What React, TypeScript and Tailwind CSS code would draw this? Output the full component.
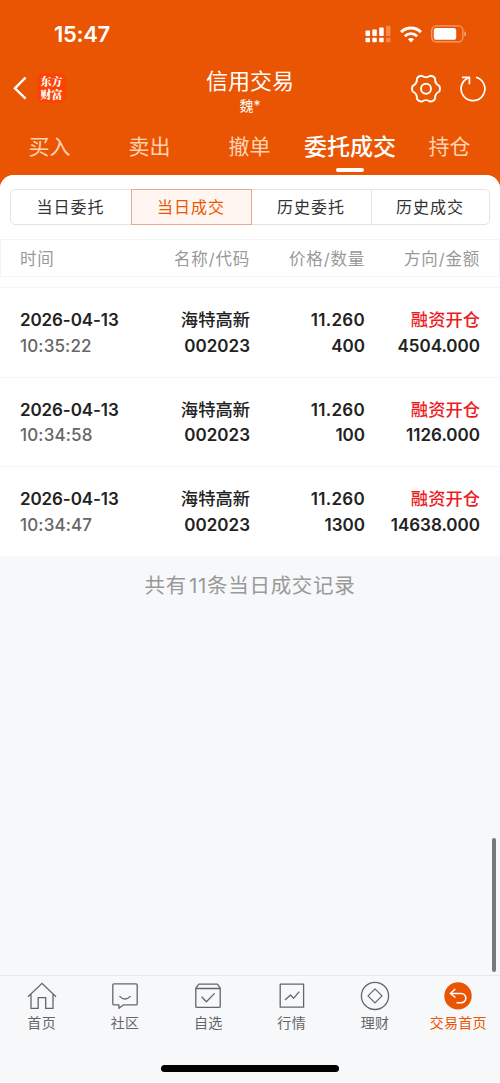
import React, { type ReactNode } from 'react';
import clsx from 'clsx';

interface RecordType {
  date: string;
  time: string;
  name: string;
  code: string;
  price: string;
  count: string;
  direction: string;
  amount: string;
}

const tabs = ['买入', '卖出', '撤单', '委托成交', '持仓'];
const subTabs = ['当日委托', '当日成交', '历史委托', '历史成交'];

const records: RecordType[] = [
  {
    date: '2026-04-13',
    time: '10:35:22',
    name: '海特高新',
    code: '002023',
    price: '11.260',
    count: '400',
    direction: '融资开仓',
    amount: '4504.000',
  },
  {
    date: '2026-04-13',
    time: '10:34:58',
    name: '海特高新',
    code: '002023',
    price: '11.260',
    count: '100',
    direction: '融资开仓',
    amount: '1126.000',
  },
  {
    date: '2026-04-13',
    time: '10:34:47',
    name: '海特高新',
    code: '002023',
    price: '11.260',
    count: '1300',
    direction: '融资开仓',
    amount: '14638.000',
  },
];

const StatusBar = () => (
  <div className="flex h-[66px] items-start justify-between pt-[20px] pr-[33px] pl-[54px]">
    <span className="text-[22px] leading-[28px] font-semibold tracking-[-0.3px]">15:47</span>
    <div className="flex items-center pt-[5px]">
      <svg width="26" height="18" viewBox="0 0 26 18" fill="currentColor">
        <rect x="0.5" y="5.5" width="4.5" height="5.5" rx="0.8" />
        <rect x="7.3" y="4.5" width="4.5" height="6.5" rx="0.8" />
        <rect x="14.2" y="2.5" width="4.5" height="8.5" rx="0.8" />
        <rect x="21" y="0.8" width="4.5" height="10.2" rx="0.8" opacity="0.3" />
        <rect x="0.5" y="12.7" width="4.5" height="4.5" rx="0.8" />
        <rect x="7.3" y="12.7" width="4.5" height="4.5" rx="0.8" />
        <rect x="14.2" y="12.7" width="4.5" height="4.5" rx="0.8" />
        <rect x="21" y="12.7" width="4.5" height="4.5" rx="0.8" opacity="0.3" />
      </svg>
      <svg className="ml-[9px]" width="22" height="17" viewBox="0 0 22 17" fill="none" stroke="currentColor">
        <path d="M1.1 6.1a14.2 14.2 0 0 1 19.8 0" strokeWidth="3" />
        <path d="M4.8 10.2a9 9 0 0 1 12.4 0" strokeWidth="2.8" />
        <path d="M11 16.6l-3.1-3.3a4.6 4.6 0 0 1 6.2 0z" fill="currentColor" stroke="none" />
      </svg>
      <svg className="ml-[9px]" width="36" height="18" viewBox="0 0 36 18" fill="none">
        <rect x="0.7" y="0.9" width="31.2" height="16" rx="4.6" stroke="currentColor" strokeWidth="1.2" opacity="0.45" />
        <rect x="2.8" y="3" width="22.4" height="11.8" rx="2.6" fill="currentColor" />
        <path d="M33.4 6.2c2.2.8 2.2 4.6 0 5.4z" fill="currentColor" opacity="0.5" />
      </svg>
    </div>
  </div>
);

const TitleBar = () => (
  <div className="grid h-[53px] grid-cols-[1fr_auto_1fr] items-start">
    <div className="flex items-center pt-[7px] pl-[13px]">
      <svg width="14" height="24" viewBox="0 0 14 24" fill="none" stroke="currentColor" strokeWidth="2.4">
        <path d="M12.6 1.5L1.9 12.3l10.7 10.3" />
      </svg>
      <div className="ml-[10px] flex h-[30px] w-[29px] flex-col items-center justify-center rounded-[6px] bg-[#fb4305] font-['Noto_Serif_CJK_SC','Noto_Sans_CJK_SC',serif] text-[11px] leading-[13px] font-black">
        <span>东方</span>
        <span>财富</span>
      </div>
    </div>
    <div className="flex flex-col items-center">
      <h1 className="text-[22px] leading-[31px]">信用交易</h1>
      <p className="text-[14px] leading-[18px]">魏*</p>
    </div>
    <div className="flex items-center justify-end pt-[8px] pr-[13px]">
      <svg width="30" height="30" viewBox="0 0 30 30" fill="none" stroke="currentColor" strokeWidth="1.9" strokeLinejoin="round">
        <path d="M19.2 1.8Q22.4 1.8 24.1 4.6Q23.7 9.7 28.3 11.9Q29.6 14.7 28.3 17.5Q23.7 19.7 24.1 24.8Q22.4 27.6 19.2 27.6Q15 24.7 10.8 27.6Q7.6 27.6 5.9 24.8Q6.3 19.7 1.7 17.5Q.4 14.7 1.7 11.9Q6.3 9.7 5.9 4.6Q7.6 1.8 10.8 1.8Q15 4.7 19.2 1.8Z" />
        <circle cx="15" cy="14.7" r="5" />
      </svg>
      <svg className="ml-[18px]" width="28" height="28" viewBox="0 0 28 28" fill="none" stroke="currentColor" strokeWidth="1.7">
        <path d="M17 2.3a11.9 11.9 0 1 1-7.3.4" />
        <path d="M3 2.4h7.4v6.8" />
      </svg>
    </div>
  </div>
);

const TabBar = () => (
  <nav className="grid h-[56px] grid-cols-5">
    {tabs.map((tab, idx) => (
      <div key={tab} className="flex flex-col items-center">
        <span
          className={clsx(
            'mt-[12px] leading-[32px] whitespace-nowrap',
            idx === 3 ? 'text-[23px] font-medium text-white' : 'pr-[1px] text-[21px] text-[#ffd3b2]'
          )}
        >
          {tab}
        </span>
        {idx === 3 && <i className="mt-[5px] h-[4px] w-[28px] rounded-full bg-white" />}
      </div>
    ))}
  </nav>
);

const SubTabBar = () => (
  <div className="mx-[10px] mt-[14px] grid h-[36px] grid-cols-[120px_121px_120px_117px] rounded-[5px] border border-[#e3e4e6]">
    {subTabs.map((tab, idx) => (
      <div
        key={tab}
        className={clsx(
          'flex items-center justify-center pr-px text-[16px] tracking-[1px]',
          idx === 1
            ? '-my-px border border-[#e5a797] bg-[#fff5f1] text-[#ea5504]'
            : 'text-[#333]',
          idx === 2 && 'border-r border-[#e3e4e6]'
        )}
      >
        {tab}
      </div>
    ))}
  </div>
);

const columns = 'grid grid-cols-[130px_100px_115px_115px] px-[20px] text-right';

const RecordRow = ({ record }: { record: RecordType }) => (
  <li className={clsx(columns, 'h-[89.6px] border-t border-[#f5f5f7] pt-[20px] text-[17px] leading-[25.6px] font-semibold text-[#222]')}>
    <div className="flex flex-col text-left">
      <span className="tracking-[-0.1px]">{record.date}</span>
      <span className="font-medium tracking-[0.15px] text-[#666]">{record.time}</span>
    </div>
    <div className="flex flex-col">
      <span className="-mt-px mb-px text-[17.3px] font-medium">{record.name}</span>
      <span>{record.code}</span>
    </div>
    <div className="flex flex-col">
      <span className="tracking-[0.3px]">{record.price}</span>
      <span>{record.count}</span>
    </div>
    <div className="flex flex-col whitespace-nowrap">
      <span className="-mt-px mb-px text-[17.3px] font-medium text-[#ed1c24]">{record.direction}</span>
      <span>{record.amount}</span>
    </div>
  </li>
);

interface NavItemProps {
  label: string;
  active?: boolean;
  children: ReactNode;
}

const NavItem = ({ label, active, children }: NavItemProps) => (
  <div className={clsx('flex flex-col items-center pt-[5px]', active ? 'text-[#ea5504]' : 'text-[#666]')}>
    <svg width="30" height="30" viewBox="0 0 30 30" fill="none" stroke="currentColor" strokeWidth="1.3" strokeLinejoin="round">
      {children}
    </svg>
    <span className="mt-px text-[14px] leading-[22px] tracking-[0.3px]">{label}</span>
  </div>
);

const BottomNav = () => (
  <footer className="relative flex h-[107px] flex-col items-center border-t border-[#e6e8eb] bg-[#f7f8fa]">
    <div className="grid w-full grid-cols-6">
      <NavItem label="首页">
        <path d="M1 15.8L15 2.4l14 13.4M4 13.4v13.9h7.2V16.7h7.5v10.6H26V13.4" strokeLinejoin="miter" />
      </NavItem>
      <NavItem label="社区">
        <path d="M4 2.9h22q1.2 0 1.2 1.2v18.6q0 1.2-1.2 1.2H13.2l-4.3 3.4v-3.4H4q-1.2 0-1.2-1.2V4.1Q2.8 2.9 4 2.9z" />
        <path d="M9.4 15.1q5.6 5.8 11.2 0" />
      </NavItem>
      <NavItem label="自选">
        <path d="M5.8 3.2h18.6l2.8 4v18.2q0 1-1 1H3.8q-1 0-1-1V7.2zM2.8 7.5h24.4M8.6 15.8l4.8 5 8.2-8.4" />
      </NavItem>
      <NavItem label="行情">
        <path d="M3.2 3.2h23.4v23H3.2zM8 19l5.5-5 3.2 3.2 5.6-6.6" />
      </NavItem>
      <NavItem label="理财">
        <circle cx="15" cy="14.9" r="13.6" />
        <path d="M15 7.9l7 7-7 7-7-7z" />
      </NavItem>
      <NavItem label="交易首页" active>
        <circle cx="15" cy="14.9" r="13.7" fill="currentColor" stroke="none" />
        <path d="M12.2 8L7.4 12.5l5 4M7.4 12.5h10.8a4.6 4.6 0 0 1 0 9.2h-4.7" stroke="#fff" strokeWidth="1.6" />
      </NavItem>
    </div>
    <div className="mt-[31px] h-[7px] w-[178px] rounded-full bg-black" />
    <div className="absolute right-[4px] bottom-[110px] h-[134px] w-[4px] rounded-full bg-[#79797b]" />
  </footer>
);

const App = () => (
  <div className="flex h-[1083px] w-[500px] flex-col overflow-hidden bg-white font-['Inter','Noto_Sans_CJK_SC',sans-serif]">
    <header className="-mb-[14px] h-[189px] shrink-0 bg-[#ea5504] text-white">
      <StatusBar />
      <TitleBar />
      <TabBar />
    </header>
    <main className="relative flex min-h-0 flex-1 flex-col overflow-hidden rounded-t-[14px] bg-[#f7f8fa]">
      <section className="bg-white">
        <SubTabBar />
        <div className={clsx(columns, 'mt-[14px] h-[38px] items-center border border-[#f3f4f6] !px-[19px] text-[16.5px] tracking-[0.8px] text-[#999]')}>
          <span className="pt-[2px] text-left">时间</span>
          <span className="pt-[2px]">名称/代码</span>
          <span className="pt-[2px]">价格/数量</span>
          <span className="pt-[2px]">方向/金额</span>
        </div>
        <ul className="mt-[10px]">
          {records.map((record) => (
            <RecordRow key={record.time} record={record} />
          ))}
        </ul>
      </section>
      <p className="pt-[15px] text-center text-[20.5px] leading-[30px] tracking-[0.7px] text-[#999]">
        共有<span className="pl-[2px]">11</span>条当日成交记录
      </p>
    </main>
    <BottomNav />
    <div className="h-px shrink-0 bg-white" />
  </div>
);

export default App;
